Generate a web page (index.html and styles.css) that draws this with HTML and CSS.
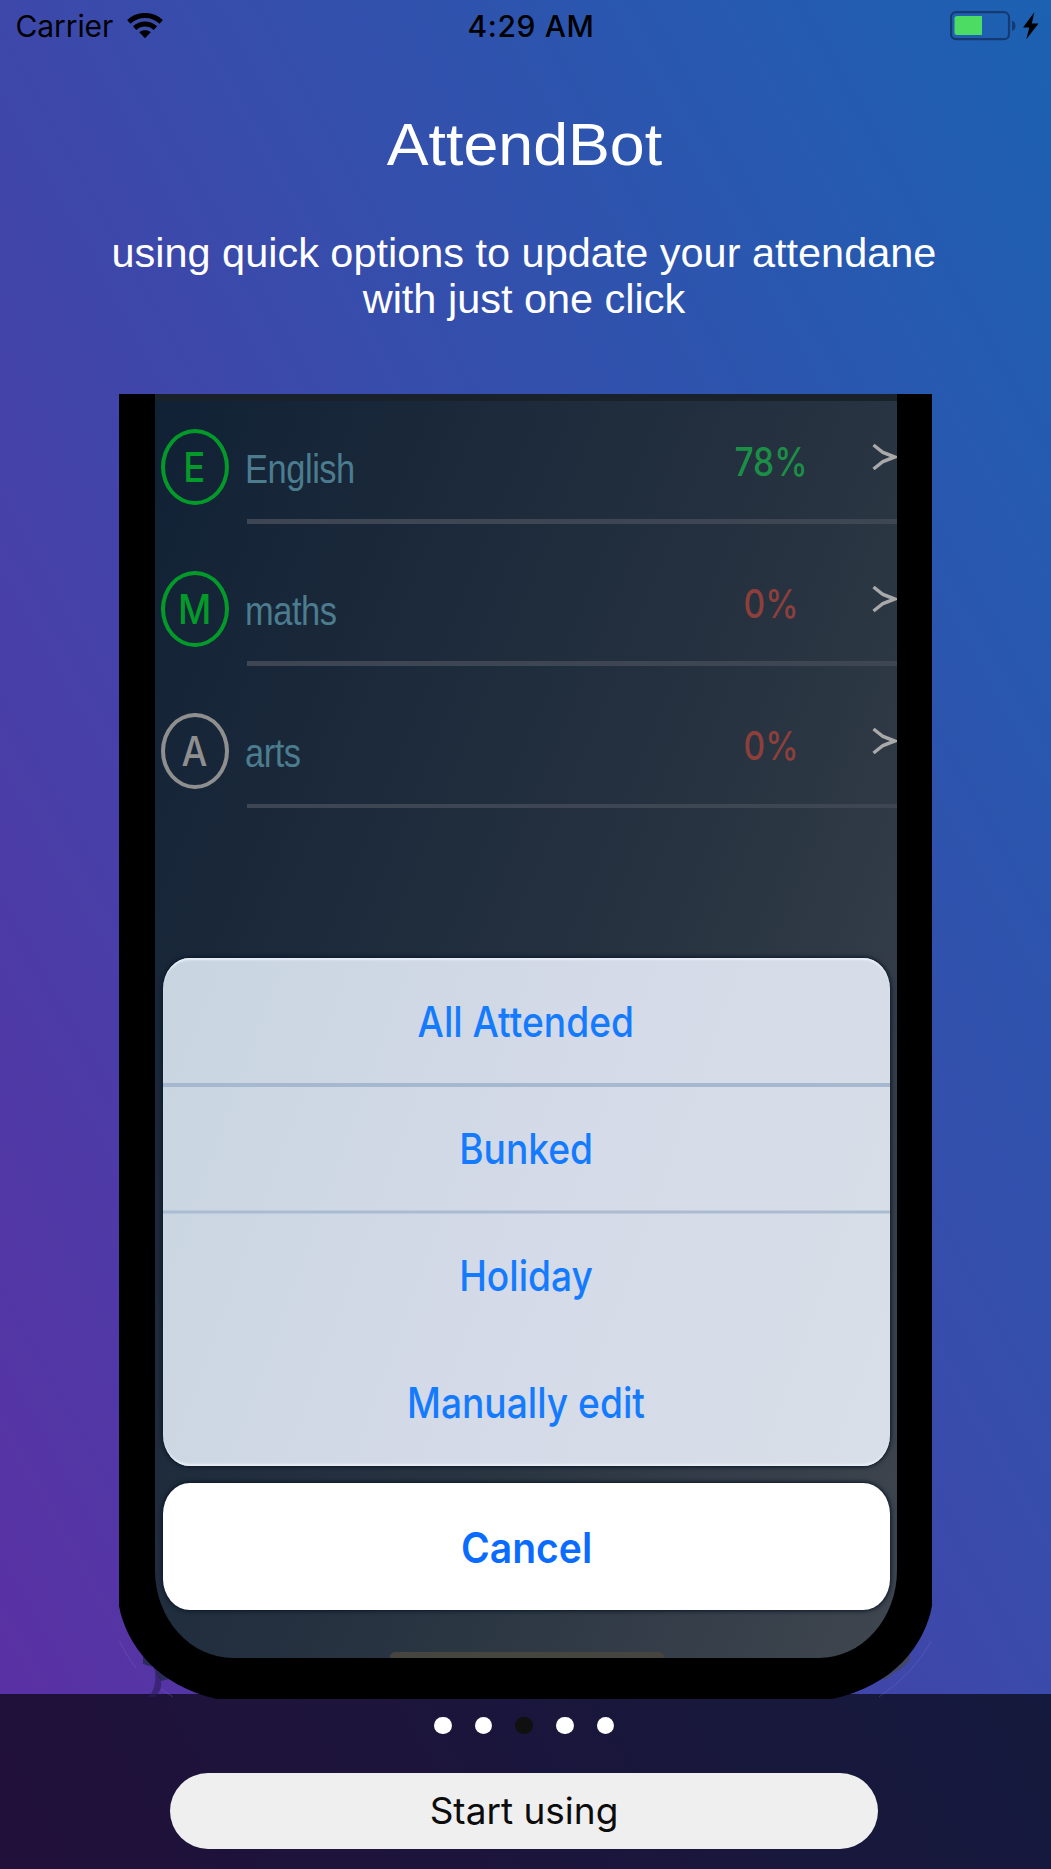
FILE: index.html
```
<!DOCTYPE html>
<html lang="en">
<head>
<meta charset="utf-8">
<title>AttendBot</title>
<link rel="stylesheet" href="styles.css">
</head>
<body>
<div class="page">
  <header class="status">
    <div class="status-left">
      <span class="carrier">Carrier</span>
      <svg class="wifi" width="36" height="26" viewBox="0 0 36 26">
        <g fill="none" stroke="#000" stroke-width="5">
          <path d="M1.8 8.8C11 .3 25 .3 34.2 8.8"/>
          <path d="M7.6 15.2C13.5 9.7 22.500 9.700 28.400 15.200"/>
        </g>
        <path d="M12.300 19.300C15.500 16.700 20.500 16.700 23.700 19.300L18 25.300Z"/>
      </svg>
    </div>
    <span class="time">4:29 AM</span>
    <svg class="battery" width="90" height="30" viewBox="0 0 90 30">
      <rect x="1" y="1.200" width="58" height="27" rx="5" fill="none" stroke="#153a72" stroke-width="2.200"/>
      <path d="M7 5H32V24H7Q4.500 24 4.500 21.500V7.500Q4.500 5 7 5Z" fill="#4cdc64"/>
      <path d="M62 9.500Q65.500 11 65.500 14.700Q65.500 18.500 62 20Z" fill="#153a72"/>
      <path d="M84.300 1.300L73 16.500H79.300L76.300 28.300L88.500 12.500H81.800Z"/>
    </svg>
  </header>

  <h1 class="title">AttendBot</h1>
  <p class="subtitle">using quick options to update your attendane<br>with just one click</p>

  <div class="phone-wrap">
    <svg class="corners" width="813" height="100" viewBox="0 0 813 100">
      <path d="M24 57V65L34 68L42 82L50 80L40 60Z" fill="#2c2c5c"/>
      <path d="M36 72Q46 82 40 93L36 98H29Q38 90 36 72Z" fill="#2b1a5c" opacity=".6"/>
      <path d="M780 60L791 56V61Q784 70 774 74L768 80L762 80Z" fill="#43486a"/>
      <g fill="none" stroke="#8a78bd" stroke-opacity=".3">
        <path d="M.5 42Q7 56 17 69M42 90L54 98"/>
        <path d="M812.500 42Q795 74 760 98"/>
      </g>
    </svg>
    <div class="phone">
      <div class="screen">
        <div class="row green">
          <div class="badge"><span class="narrow">E</span></div>
          <div class="row-body">
            <span class="subject">English</span>
            <span class="percent">78%</span>
            <svg class="chevron" width="25" height="28" viewBox="0 0 25 28"><path d="M1.500 2L11 9.500L23 14L11 18.500L1.500 26"/></svg>
          </div>
        </div>
        <div class="row green">
          <div class="badge"><span class="narrow">M</span></div>
          <div class="row-body">
            <span class="subject">maths</span>
            <span class="percent low">0%</span>
            <svg class="chevron" width="25" height="28" viewBox="0 0 25 28"><path d="M1.500 2L11 9.500L23 14L11 18.500L1.500 26"/></svg>
          </div>
        </div>
        <div class="row">
          <div class="badge"><span class="narrow">A</span></div>
          <div class="row-body">
            <span class="subject">arts</span>
            <span class="percent low">0%</span>
            <svg class="chevron" width="25" height="28" viewBox="0 0 25 28"><path d="M1.500 2L11 9.500L23 14L11 18.500L1.500 26"/></svg>
          </div>
        </div>
        <div class="sheet">
          <div class="option line-thick"><span class="narrow">All Attended</span></div>
          <div class="option line-thin"><span class="narrow">Bunked</span></div>
          <div class="option"><span class="narrow">Holiday</span></div>
          <div class="option"><span class="narrow">Manually edit</span></div>
        </div>
        <div class="cancel"><span class="narrow">Cancel</span></div>
        <div class="home-bar"></div>
      </div>
    </div>
  </div>

  <footer class="footer">
    <div class="dots"><i></i><i></i><i class="on"></i><i></i><i></i></div>
    <div class="start">Start using</div>
  </footer>
</div>
</body>
</html>
```
FILE: styles.css
```
* { box-sizing: border-box; }
body { margin: 0; }
.page {
  width: 1051px;
  height: 1869px;
  overflow: hidden;
  display: flex;
  flex-direction: column;
  background: linear-gradient(to top right, #5d2ea3 0%, #3d48aa 50%, #1c61b2 100%);
  font-family: Inter, "Liberation Sans", sans-serif;
}
.status {
  height: 52px;
  flex: none;
  display: grid;
  grid-template-columns: 1fr auto 1fr;
  line-height: 52px;
  font-size: 30px;
  color: #000;
}
.status-left { display: flex; padding-left: 15.500px; }
.carrier { letter-spacing: -.1px; width: 111.500px; }
.wifi { margin-top: 12.500px; }
.time { font-weight: 500; letter-spacing: .6px; padding-left: 11px; }
.battery { justify-self: end; margin: 11px 11px 0 0; }

.title {
  margin: 57px 0 0;
  font: 400 60px/72px "Liberation Sans", sans-serif;
  text-align: center;
  color: #fff;
  padding-right: 2px;
  transform: scaleX(1.045);
}
.subtitle {
  margin: 49px 0 0;
  font: 400 40px/46px "Liberation Sans", sans-serif;
  text-align: center;
  color: #fff;
  padding-right: 3px;
  transform: scaleX(1.036);
}

.phone-wrap { position: relative; width: 813px; height: 1305px; flex: none; margin: 72px 0 0 119px; z-index: 1; }
.phone {
  position: relative;
  height: 1305px;
  background: #000;
  padding: 0 35.500px;
  clip-path: path("M0 0H813V1212C806 1250 775 1292 713 1305H98C38 1292 7 1250 0 1212Z");
}
.corners { position: absolute; left: 0; bottom: 0; }
.screen {
  height: 1264px;
  overflow: hidden;
  display: flex;
  flex-direction: column;
  background: linear-gradient(112deg, #112135, #263240 55%, #3f464f);
  box-shadow: inset 0 7px 0 #19212b;
  border-radius: 0 0 78px 78px / 0 0 88px 88px;
}
.row { display: flex; align-items: flex-start; height: 142px; flex: none; padding-left: 6.500px; color: #8f8f90; }
.row:first-child { margin-top: -12px; }
.green { color: #049a2a; }
.badge {
  width: 67.500px;
  height: 76px;
  margin: 47px 18px 0 0;
  border: 4px solid;
  border-radius: 50%;
  text-align: center;
  font-size: 41px;
  font-weight: 500;
  line-height: 69px;
}
.narrow { display: inline-block; transform: scaleX(.89); }
.row-body {
  flex: 1;
  height: 142px;
  display: flex;
  align-items: flex-start;
  border-bottom: 5px solid #3d4652;
}
.row:nth-child(3) .row-body { border-bottom-width: 4px; }
.subject {
  width: 480px;
  margin-top: 63.500px;
  font: 40px/46px "Liberation Sans", sans-serif;
  letter-spacing: -.5px;
  color: #4b7d8e;
  transform: scaleX(.86);
  transform-origin: 0 0;
  margin-left: -2px;
}
.percent {
  width: 92px;
  margin: 57px 0 0 0;
  font-size: 39px;
  font-weight: 500;
  line-height: 46px;
  text-align: center;
  color: #1b8f45;
  transform: scaleX(.86);
}
.low { color: #8c3f3b; }
.chevron { margin: 61px 0 0 auto; fill: none; stroke: #a9a9a9; stroke-width: 3.500; }

.sheet {
  flex: none;
  width: 727px;
  height: 508px;
  margin: 149.500px 0 0 8.500px;
  border-radius: 27px / 31px;
  overflow: hidden;
  background: linear-gradient(110deg, #c8d5e1, #d4dae7 50%, #d8dfe8);
  box-shadow: 0 0 4px 1px #0a1626, inset 0 3px 2px -1px #eaf0f7, inset 0 -3px 2px -1px #e8eef6;
}
.option, .cancel { height: 127px; line-height: 127px; font-size: 42px; text-align: center; color: #147bff; }
.option { font-weight: 500; }
.option .narrow { transform: translateX(-.5px) scaleX(.885); }
.line-thick { box-shadow: 0 2px #a5b8cf, inset 0 -2px #a5b8cf; }
.line-thin { box-shadow: 0 1.500px #aabbd2, inset 0 -1.500px #aabbd2; }
.line-thick, .line-thin { position: relative; }
.cancel {
  flex: none;
  width: 727px;
  margin: 17.500px 0 0 8.500px;
  border-radius: 27px / 31px;
  background: #fff;
  color: #0a6cff;
  font-weight: 600;
  line-height: 129px;
  box-shadow: 0 0 4px 1px #0a1626;
}
.cancel .narrow { transform: scaleX(.93); }
.home-bar { width: 274px; height: 6px; margin: auto 0 0 235.500px; background: #474540; border-radius: 5px 5px 0 0; flex: none; }

.footer {
  flex: none;
  height: 175px;
  margin-top: -5px;
  padding-top: 22.500px;
  background: rgba(0, 0, 0, .645);
}
.dots { display: flex; gap: 23.200px; margin-left: 434px; }
.dots i { width: 17.500px; height: 17.500px; border-radius: 50%; background: #fff; }
.dots .on { background: #0f100f; }
.start {
  width: 708px;
  height: 76px;
  margin: 39px 0 0 170px;
  border-radius: 38px;
  background: #efefef;
  color: #0c0c0c;
  text-align: center;
  font-size: 37px;
  line-height: 75px;
}
```
